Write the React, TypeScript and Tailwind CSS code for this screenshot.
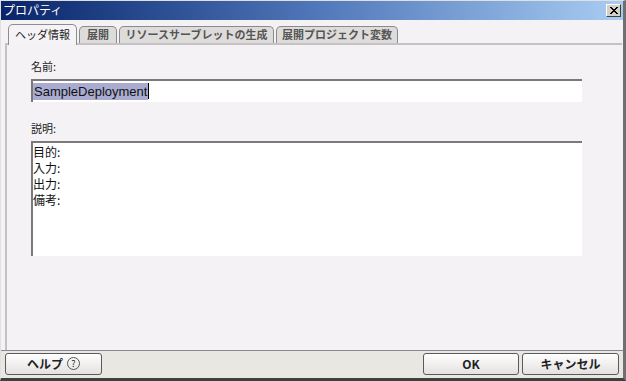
const font = "font-['Noto_Sans_CJK_JP','Noto_Sans',sans-serif]";

function Tab({ label, active, w }: { label: string; active?: boolean; w: string }) {
  return (
    <div
      className={`${w} flex items-center justify-center whitespace-nowrap rounded-t-[5px] border border-b-0 text-[11px] leading-none ${
        active
          ? "relative z-10 -mb-[2px] h-[21px] border-[#8d8d8d] bg-[#f5f3f5] text-[#222]"
          : "h-[17px] border-[#8a8a8a] bg-[#dedcdb] font-bold text-[#555]"
      }`}
    >
      {label}
    </div>
  );
}

function Button({ children, w }: { children: React.ReactNode; w: string }) {
  return (
    <button
      type="button"
      className={`${w} flex h-[22px] items-center justify-center gap-1 rounded-[3px] border border-[#5a5a5a] bg-gradient-to-b from-[#fefefe] to-[#e4e2e0] text-[12px] font-bold text-[#222]`}
    >
      {children}
    </button>
  );
}

export default function App() {
  return (
    <div className={`${font} flex h-[381px] w-[626px] flex-col border-b-[3px] border-r-[3px] border-b-[#404040] border-r-[#707070] border-l border-t border-l-[#e0e0e0] border-t-[#e0e0e0] bg-[#e9e7e2]`}>
      <div className="flex h-[19px] items-center justify-between bg-gradient-to-r from-[#0a246a] via-[#4f76b8] to-[#a9cdf2] pl-[2px] pr-[2px]">
        <span className="text-[12px] leading-none text-white">プロパティ</span>
        <div className="flex h-[13px] w-[15px] items-center justify-center border border-b-[#404040] border-r-[#404040] border-l-white border-t-white bg-[#d4d0c8]">
          <svg width="8" height="7" viewBox="0 0 8 7">
            <path d="M0 0L7 7M1 0L8 7M7 0L0 7M8 0L1 7" stroke="#000" strokeWidth="1" />
          </svg>
        </div>
      </div>

      <div className="flex flex-1 flex-col bg-[#f4f2f4] pl-[4px] pr-0">
        <div className="flex items-end gap-[2px] pl-[3px] pt-[4px]">
          <Tab label="ヘッダ情報" active w="w-[69px]" />
          <Tab label="展開" w="w-[38px]" />
          <Tab label="リソースサーブレットの生成" w="w-[155px]" />
          <Tab label="展開プロジェクト変数" w="w-[122px]" />
        </div>

        <div className="flex h-[307px] w-[617px] flex-col border-l-2 border-t-2 border-l-[#c4c2c4] border-t-[#c4c2c4] pl-[24px] pt-[15px]">
          <div className="h-[12px] text-[11px] leading-[12px] text-[#222]">名前:</div>
          <div className="mt-[7px] flex h-[23px] w-[551px] items-center border-l-2 border-t-2 border-l-[#7a7a7a] border-t-[#7a7a7a] bg-white">
            <span className="bg-[#a9abd0] px-[1px] font-['Liberation_Sans',sans-serif] text-[13px] leading-[17px] text-[#111]">SampleDeployment</span>
            <span className="h-[16px] w-px bg-black" />
          </div>
          <div className="mt-[20px] h-[12px] text-[11px] leading-[12px] text-[#222]">説明:</div>
          <div className="mt-[7px] flex h-[115px] w-[551px] flex-col border-l-2 border-t-2 border-l-[#7a7a7a] border-t-[#7a7a7a] bg-white pt-[1px] text-[12px] leading-[16px] text-[#111]">
            <span>目的:</span>
            <span>入力:</span>
            <span>出力:</span>
            <span>備考:</span>
          </div>
        </div>
      </div>

      <div className="flex h-[29px] items-center justify-between border-t border-t-[#8a8a8a] px-[4px] pb-[1px]">
        <Button w="w-[97px]">
          ヘルプ
          <span className="flex h-[13px] w-[13px] items-center justify-center rounded-full border border-[#555] text-[9px] font-normal leading-none">?</span>
        </Button>
        <div className="flex gap-[3px]">
          <Button w="w-[96px]">OK</Button>
          <Button w="w-[97px]">キャンセル</Button>
        </div>
      </div>
    </div>
  );
}
